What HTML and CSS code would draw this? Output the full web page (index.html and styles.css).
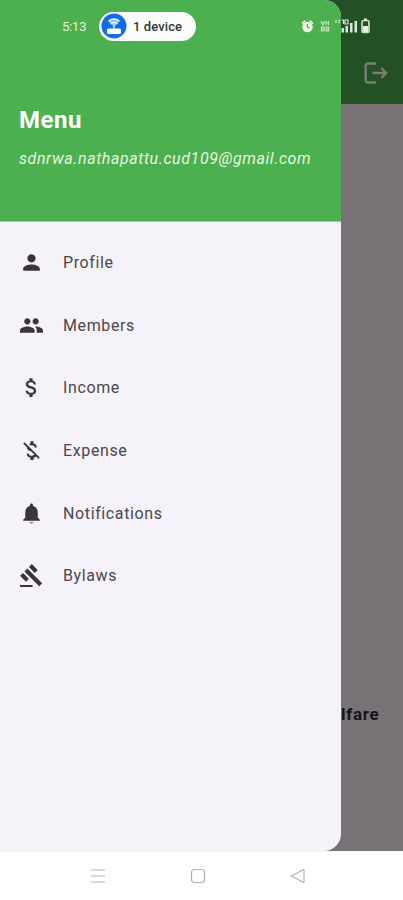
FILE: index.html
```
<!DOCTYPE html>
<html lang="en">
<head>
<meta charset="utf-8">
<title>Menu</title>
<link rel="stylesheet" href="styles.css">
</head>
<body>
<div class="phone">
  <main class="screen">
    <header class="appbar">
      <svg class="logout" viewBox="0 0 24 22" fill="none" stroke="currentColor" stroke-width="2.4"><path d="M12 1.5H4A2.3 2.3 0 0 0 1.7 3.8v14.4A2.3 2.3 0 0 0 4 20.5h8M8.5 11h13M17.2 6l5 5-5 5"/></svg>
    </header>
    <p class="page-title">lfare</p>
    <aside class="drawer">
      <div class="drawer-header">
        <h1>Menu</h1>
        <p class="email">sdnrwa.nathapattu.cud109@gmail.com</p>
      </div>
      <nav class="items">
        <a class="item"><svg viewBox="0 0 24 24"><path d="M12 12c2.21 0 4-1.79 4-4s-1.79-4-4-4-4 1.790-4 4 1.790 4 4 4zm0 2c-2.670 0-8 1.340-8 4v2h16v-2c0-2.660-5.330-4-8-4z"/></svg><span>Profile</span></a>
        <a class="item"><svg viewBox="0 0 24 24"><path d="M16 11c1.660 0 2.990-1.340 2.990-3S17.660 5 16 5s-3 1.340-3 3 1.340 3 3 3zm-8 0c1.660 0 2.990-1.340 2.990-3S9.660 5 8 5 5 6.340 5 8s1.340 3 3 3zm0 2c-2.330 0-7 1.170-7 3.500V19h14v-2.500c0-2.330-4.670-3.500-7-3.500zm8 0c-.29 0-.62.02-.97.05 1.160.84 1.970 1.970 1.970 3.450V19h6v-2.500c0-2.330-4.670-3.500-7-3.500z"/></svg><span>Members</span></a>
        <a class="item"><svg viewBox="0 0 24 24"><path d="M11.800 10.900c-2.270-.59-3-1.200-3-2.150 0-1.090 1.010-1.850 2.700-1.850 1.780 0 2.440.85 2.500 2.100h2.210c-.07-1.720-1.120-3.300-3.210-3.810V3h-3v2.160c-1.940.42-3.500 1.680-3.500 3.610 0 2.310 1.910 3.460 4.700 4.130 2.500.6 3 1.480 3 2.410 0 .69-.49 1.790-2.700 1.790-2.060 0-2.870-.92-2.980-2.100h-2.200c.12 2.190 1.760 3.420 3.680 3.830V21h3v-2.150c1.950-.37 3.500-1.500 3.500-3.550 0-2.840-2.430-3.810-4.700-4.400z"/></svg><span>Income</span></a>
        <a class="item"><svg viewBox="0 0 24 24"><path d="M12.500 6.900c1.780 0 2.440.85 2.500 2.100h2.210c-.07-1.720-1.120-3.300-3.210-3.810V3h-3v2.160c-.53.12-1.030.3-1.480.54l1.470 1.470c.41-.17.91-.27 1.510-.27zM5.330 4.060L4.060 5.330 7.500 8.770c0 2.080 1.560 3.210 3.910 3.910l3.510 3.510c-.34.48-1.050.91-2.420.91-2.060 0-2.870-.92-2.980-2.100h-2.200c.12 2.190 1.760 3.420 3.680 3.830V21h3v-2.150c.96-.18 1.820-.55 2.450-1.120l2.220 2.220 1.270-1.270L5.330 4.060z"/></svg><span>Expense</span></a>
        <a class="item"><svg viewBox="0 0 24 24"><path d="M12 22c1.100 0 2-.9 2-2h-4c0 1.100.89 2 2 2z" opacity=".45"/><path d="M18 16v-5c0-3.070-1.640-5.640-4.500-6.320V4c0-.83-.67-1.500-1.500-1.500s-1.500.67-1.500 1.500v.68C7.630 5.360 6 7.920 6 11v5l-2 2v1h16v-1l-2-2z"/></svg><span>Notifications</span></a>
        <a class="item"><svg viewBox="0 0 24 24"><path d="M1 21h12v2H1zM5.245 8.070l2.830-2.827 14.140 14.142-2.828 2.828zM12.317 1l5.657 5.656-2.830 2.830-5.654-5.660zM3.825 9.485l5.657 5.657-2.828 2.828-5.657-5.657z"/></svg><span>Bylaws</span></a>
      </nav>
    </aside>
    <div class="status">
      <span class="time">5:13</span>
      <span class="pill">
        <svg viewBox="0 0 26 26"><circle cx="13" cy="13" r="12.500" fill="#146be8"/><path d="M7 8q6-4.500 12 0l-6 6z" fill="#8fc4f4"/><path d="M7.500 8q5.500-4 11 0M9.500 11q3.500-3 7 0M13 12v5" fill="none" stroke="#e4f3ff" stroke-width="1.300"/><rect x="6" y="15.500" width="14" height="5.500" rx="1.500" fill="#fff"/></svg>
        <span>1 device</span>
      </span>
      <svg class="signals" viewBox="0 0 72 20">
        <g fill="#e9f7e5"><circle cx="7.500" cy="11" r="5.300"/><path d="M1.500 7l3.200-3 1.200 1.200-3.300 3zM13.500 7l-3.200-3-1.200 1.200 3.300 3z"/></g>
        <path d="M7.500 8v3.200l2 1" fill="none" stroke="#4caf50" stroke-width="1.200"/>
        <g fill="none" stroke="#c3e8bf" stroke-width="1.200"><path d="M21 5l1.800 4 1.800-4M26 5v4M28.500 5v4M26 7h2.500M21.500 11h2.500v4h-2.500zM26 11h2.500v4H26zM21.500 13h2.500M26 13h2.500"/></g>
        <g fill="none" stroke="#d8e8d3" stroke-width="1.200"><path d="M36 4v3M38 4.500h2M38 6.500h2M41.500 4h2v4M45 4h3v4h-3z"/></g>
        <g fill="#d9e5d6"><path d="M41.500 12h2.500v4.500h-2.500zM45.500 10h2.500v6.500h-2.500zM50 7h2.500v9.500h-2.500zM54.500 5h2.500v11.500h-2.500z"/></g>
        <rect x="62" y="4.500" width="7" height="12" rx="1.500" fill="none" stroke="#cbdcc7" stroke-width="1.700"/>
        <path d="M64 2.500h3v2h-3zM63 10h5v6h-5z" fill="#e8efe5"/>
      </svg>
    </div>
  </main>
  <footer class="navbar">
    <svg viewBox="0 0 16 16"><path d="M1 2h14M1 8h14M1 14h14"/></svg>
    <svg viewBox="0 0 16 16"><rect x="1.500" y="1.500" width="13" height="13" rx="3"/></svg>
    <svg viewBox="0 0 16 16"><path d="M1.500 8L13 1.800q1-.5 1 .6v11.200q0 1.100-1 .6z"/></svg>
  </footer>
</div>
</body>
</html>
```
FILE: styles.css
```
* { box-sizing: border-box; }
body, h1, p { margin: 0; }
body { font-family: Roboto, sans-serif; }
.phone { width: 403px; height: 900px; display: flex; flex-direction: column; overflow: hidden; background: #fefffe; }
.screen { position: relative; height: 851px; background: #787277; overflow: hidden; }
.appbar { height: 104px; background: #245026; display: flex; justify-content: flex-end; padding: 62px 15px 0 0; color: #7b7d73; }
.logout { width: 24px; height: 22px; }
.page-title { margin: 599px 0 0 341px; font-size: 17px; line-height: 22px; font-weight: 700; letter-spacing: .7px; color: #171518; }
.drawer { position: absolute; inset: 0 auto 0 0; width: 340.5px; border-radius: 0 17px 17px 0; overflow: hidden; background: #f6f2f9; }
.drawer-header { height: 221.5px; padding: 105px 19px 0; background: #4caf50; border-bottom: 1px solid #a3cda7; color: #fff; }
h1 { font-size: 24px; line-height: 30px; font-weight: 700; letter-spacing: .5px; }
.email { margin-top: 13px; font-size: 16px; line-height: 22px; font-style: italic; letter-spacing: .58px; white-space: nowrap; color: #e5f6df; }
.items { padding-top: 9.5px; }
.item { display: flex; align-items: center; height: 62.7px; padding-left: 19px; gap: 19px; font-size: 16px; letter-spacing: .62px; color: #4b474d; }
.item svg { width: 25px; height: 25px; fill: #39353b; }
.status { position: absolute; top: 11px; left: 0; width: 403px; height: 30px; display: flex; align-items: center; }
.time { width: 37px; margin-left: 62px; font-size: 13.5px; color: #d9f5d5; letter-spacing: -.5px; }
.pill { width: 97px; height: 29px; display: flex; align-items: center; gap: 6px; padding-left: 2px; border-radius: 15px; background: #fafdfa; font-size: 13px; font-weight: 500; letter-spacing: .1px; color: #353735; }
.pill svg { width: 26px; height: 26px; }
.signals { width: 72px; height: 20px; margin-left: 104px; }
.navbar { height: 49px; display: flex; justify-content: center; align-items: center; gap: 84px; padding-right: 8px; border-top: 1px solid #f9fbf9; }
.navbar svg { width: 16px; height: 16px; fill: none; stroke: #b2b2b2; stroke-width: 1.2; }
```
